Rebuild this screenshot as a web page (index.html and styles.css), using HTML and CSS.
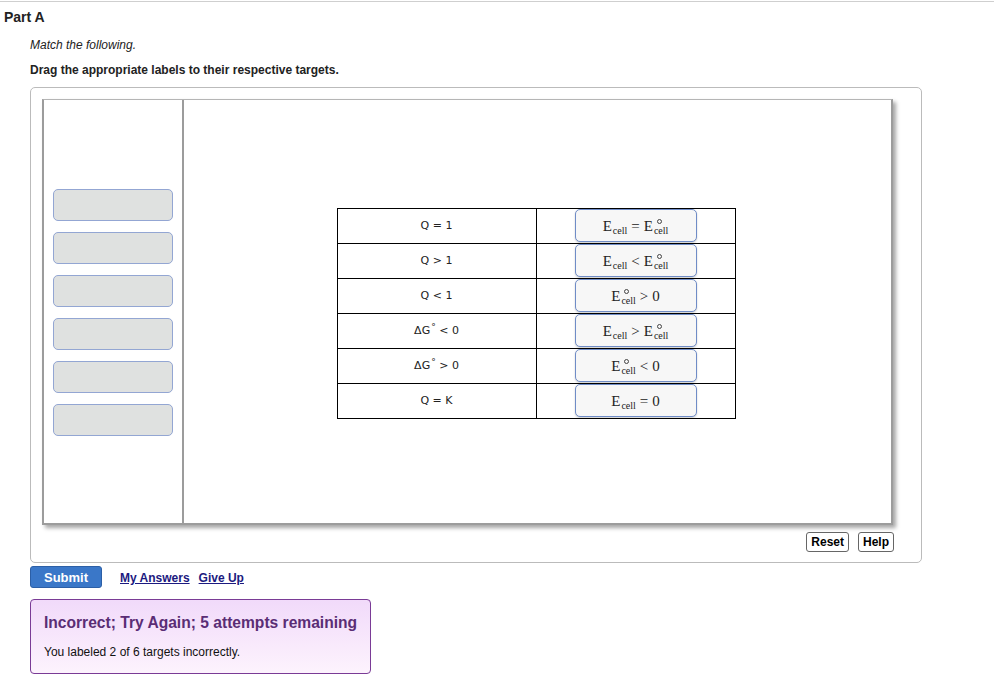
FILE: index.html
```html
<!DOCTYPE html>
<html>
<head>
	<meta charset="UTF-8">
	<title>Part A</title>
	<link rel="stylesheet" href="styles.css">
</head>
<body>
	<div class="top-rule"></div>
	<h2 class="part-title">Part A</h2>

	<div class="part-body">
		<p class="intro">Match the following.</p>
		<p class="instructions">Drag the appropriate labels to their respective targets.</p>

		<div class="dnd-container">
			<div class="dnd-canvas">
				<div class="label-bank">
					<div class="label-slot"></div>
					<div class="label-slot"></div>
					<div class="label-slot"></div>
					<div class="label-slot"></div>
					<div class="label-slot"></div>
					<div class="label-slot"></div>
				</div>
				<div class="target-area">
					<table class="match-table">
						<tr>
							<td class="cond">Q = 1</td>
							<td class="drop"><div class="label">E<span class="ss"><span class="sp"></span><span class="sb">cell</span></span><span class="op">=</span>E<span class="ss"><span class="sp"><i class="ring"></i></span><span class="sb">cell</span></span></div></td>
						</tr>
						<tr>
							<td class="cond">Q &gt; 1</td>
							<td class="drop"><div class="label">E<span class="ss"><span class="sp"></span><span class="sb">cell</span></span><span class="op">&lt;</span>E<span class="ss"><span class="sp"><i class="ring"></i></span><span class="sb">cell</span></span></div></td>
						</tr>
						<tr>
							<td class="cond">Q &lt; 1</td>
							<td class="drop"><div class="label">E<span class="ss"><span class="sp"><i class="ring"></i></span><span class="sb">cell</span></span><span class="op">&gt;</span>0</div></td>
						</tr>
						<tr>
							<td class="cond">&Delta;G<sup class="deg">&deg;</sup> &lt; 0</td>
							<td class="drop"><div class="label">E<span class="ss"><span class="sp"></span><span class="sb">cell</span></span><span class="op">&gt;</span>E<span class="ss"><span class="sp"><i class="ring"></i></span><span class="sb">cell</span></span></div></td>
						</tr>
						<tr>
							<td class="cond">&Delta;G<sup class="deg">&deg;</sup> &gt; 0</td>
							<td class="drop"><div class="label">E<span class="ss"><span class="sp"><i class="ring"></i></span><span class="sb">cell</span></span><span class="op">&lt;</span>0</div></td>
						</tr>
						<tr>
							<td class="cond">Q = K</td>
							<td class="drop"><div class="label">E<span class="ss"><span class="sp"></span><span class="sb">cell</span></span><span class="op">=</span>0</div></td>
						</tr>
					</table>
				</div>
			</div>
			<div class="dnd-tools">
				<button class="tool-btn">Reset</button>
				<button class="tool-btn">Help</button>
			</div>
		</div>

		<div class="answer-row">
			<button class="submit-btn">Submit</button>
			<a class="answer-link" href="#">My Answers</a>
			<a class="answer-link" href="#">Give Up</a>
		</div>

		<div class="feedback">
			<div class="feedback-title">Incorrect; Try Again; 5 attempts remaining</div>
			<div class="feedback-text">You labeled 2 of 6 targets incorrectly.</div>
		</div>
	</div>
</body>
</html>
```

FILE: styles.css
```css
body {
	margin: 0;
	font-family: "Liberation Sans", Arial, sans-serif;
	color: #000;
	background-color: white;
}

.top-rule {
	height: 1px;
	margin-top: 1px;
	background-color: #cfcfcf;
}

.part-title {
	margin: 6px 0 0 4px;
	font-size: 14px;
	line-height: 18px;
	font-weight: bold;
	color: #222;
}

.part-body {
	padding-left: 30px;
}

.intro {
	margin: 11px 0 0;
	font-size: 12px;
	line-height: 16px;
	font-style: italic;
	color: #222;
}

.instructions {
	margin: 9px 0 0;
	font-size: 12px;
	line-height: 16px;
	font-weight: bold;
	color: #222;
}

.dnd-container {
	width: 868px;
	margin-top: 9px;
	padding: 11px 11px 10px 11px;
	border: 1px solid #bbb;
	border-radius: 5px;
}

.dnd-canvas {
	display: flex;
	width: 847px;
	height: 423px;
	border: 2px solid #9c9c9c;
	border-top: 1px solid #b5b5b5;
	box-shadow: 3px 3px 4px rgba(0, 0, 0, 0.35);
}

.label-bank {
	width: 140px;
	border-right: 2px solid #9c9c9c;
	display: flex;
	flex-direction: column;
	justify-content: center;
	gap: 11px;
	padding-left: 9px;
	padding-top: 1px;
	box-sizing: border-box;
}

.label-slot {
	width: 120px;
	height: 32px;
	box-sizing: border-box;
	background-color: #dfe1e0;
	border: 1px solid #93a6d3;
	border-radius: 5px;
}

.target-area {
	flex: 1;
	display: flex;
	align-items: center;
	justify-content: center;
	padding-top: 3px;
	padding-right: 3px;
}

.match-table {
	border-collapse: collapse;
	width: 399px;
}

.match-table td {
	border: 1px solid #000;
	height: 35px;
	padding: 0;
	box-sizing: border-box;
}

.cond {
	width: 199px;
	text-align: center;
	font-family: "DejaVu Sans", Verdana, sans-serif;
	font-size: 11px;
	color: #222;
}

.deg {
	font-size: 9px;
	vertical-align: 4px;
	line-height: 0;
	margin-left: 1px;
}

.label {
	box-sizing: border-box;
	width: 122px;
	height: 33px;
	margin: 0 auto 0 38px;
	display: flex;
	align-items: center;
	justify-content: center;
	background-color: #f7f7f7;
	border: 1px solid #6f8cc7;
	border-radius: 5px;
	box-shadow: 0 1px 2px rgba(0, 0, 0, 0.2);
	font-family: "Liberation Serif", "Times New Roman", serif;
	font-size: 15px;
	color: #222;
	padding-top: 2px;
}

.op {
	margin: 0 4px;
	font-size: 15px;
}

.ss {
	display: inline-flex;
	flex-direction: column;
	align-items: flex-start;
	font-size: 10px;
	line-height: 8px;
	vertical-align: -3px;
	margin-left: 1px;
}

.sp {
	height: 8px;
	padding-left: 3px;
}

.ring {
	display: block;
	width: 5px;
	height: 5px;
	border: 1px solid #444;
	border-radius: 50%;
	box-sizing: border-box;
}

.dnd-tools {
	display: flex;
	justify-content: flex-end;
	gap: 9px;
	margin-top: 7px;
	padding-right: 16px;
}

.tool-btn {
	height: 20px;
	padding: 0 4px;
	font-family: "Liberation Sans", Arial, sans-serif;
	font-size: 12px;
	font-weight: bold;
	color: #000;
	background-color: white;
	border: 1px solid #666;
	border-radius: 3px;
}

.answer-row {
	display: flex;
	align-items: center;
	margin-top: 3px;
}

.submit-btn {
	width: 72px;
	height: 22px;
	font-family: "Liberation Sans", Arial, sans-serif;
	font-size: 13px;
	font-weight: bold;
	color: white;
	background-color: #3a77c8;
	border: 1px solid #2c5fa6;
	border-radius: 3px;
	margin-right: 18px;
}

.answer-link {
	font-size: 12px;
	font-weight: bold;
	color: #1c1a80;
	margin-right: 9px;
	margin-top: 2px;
}

.feedback {
	width: 341px;
	height: 75px;
	box-sizing: border-box;
	margin-top: 11px;
	padding: 14px 0 0 13px;
	border: 1px solid #7a3b96;
	border-radius: 4px;
	background: linear-gradient(to bottom, #f1dafa, #fdf3fd);
}

.feedback-title {
	font-size: 15.6px;
	line-height: 18px;
	font-weight: bold;
	color: #5a2d75;
	white-space: nowrap;
}

.feedback-text {
	margin-top: 12px;
	font-size: 12px;
	line-height: 16px;
	color: #111;
}
```
